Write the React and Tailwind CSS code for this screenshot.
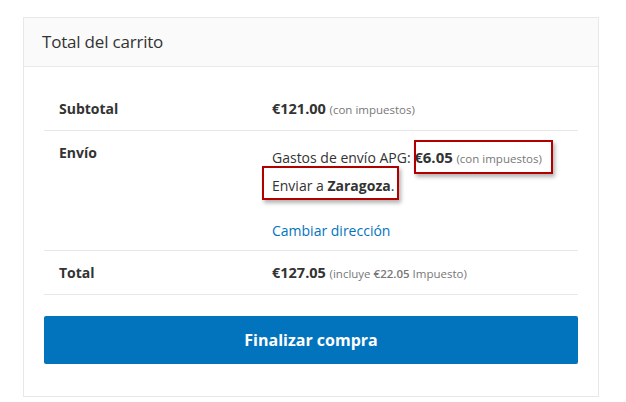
export default function App() {
  return (
    <div className="w-[626px] h-[402px] bg-white pt-[17px] pl-[23px] font-['Open_Sans',sans-serif] text-[#333]">
      <div className="w-[576px] h-[380px] border border-[#e8e8e8] flex flex-col">
        {/* Header */}
        <div className="h-[49px] bg-[#fafafa] border-b border-[#e8e8e8] flex items-center pl-[18px]">
          <h2 className="text-[17px] font-normal text-[#333] tracking-[-0.2px]">Total del carrito</h2>
        </div>

        <div className="px-[20px] pt-[20px]">
          {/* Subtotal */}
          <div className="flex h-[44px] items-center border-b border-[#e8e8e8] text-[14px]">
            <div className="w-[228px] pl-[15px] font-bold">Subtotal</div>
            <div>
              <span className="font-bold text-[14.5px]">€121.00</span>{' '}
              <span className="text-[11.5px] text-[#777]">(con impuestos)</span>
            </div>
          </div>

          {/* Envío */}
          <div className="flex h-[120px] border-b border-[#e8e8e8] text-[14px] pt-[12px]">
            <div className="w-[228px] pl-[15px] font-bold leading-[20px]">Envío</div>
            <div className="relative leading-[27px] pt-[1px]">
              <div>
                Gastos de envío APG: <span className="font-bold text-[15px]">€6.05</span>{' '}
                <span className="text-[11.5px] text-[#777]">(con impuestos)</span>
              </div>
              <div>
                Enviar a <span className="font-bold">Zaragoza</span>.
              </div>
              <div className="mt-[18px] text-[#0274be]">Cambiar dirección</div>

              {/* annotation boxes */}
              <div className="absolute left-[142px] top-[-3px] w-[139px] h-[34px] border-2 border-[#b00000] shadow-[2px_3px_4px_rgba(0,0,0,0.3)] pointer-events-none" />
              <div className="absolute left-[-10px] top-[23px] w-[137px] h-[34px] border-2 border-[#b00000] shadow-[2px_3px_4px_rgba(0,0,0,0.3)] pointer-events-none" />
            </div>
          </div>

          {/* Total */}
          <div className="flex h-[44px] items-center border-b border-[#e8e8e8] text-[14px]">
            <div className="w-[228px] pl-[15px] font-bold">Total</div>
            <div>
              <span className="font-bold text-[14.5px]">€127.05</span>{' '}
              <span className="text-[11.5px] text-[#777]">
                (incluye <span className="font-semibold">€22.05</span> Impuesto)
              </span>
            </div>
          </div>

          <button className="mt-[21px] w-full h-[48px] rounded-[2px] bg-[#0274be] text-white font-bold text-[16px]">
            Finalizar compra
          </button>
        </div>
      </div>
    </div>
  )
}
